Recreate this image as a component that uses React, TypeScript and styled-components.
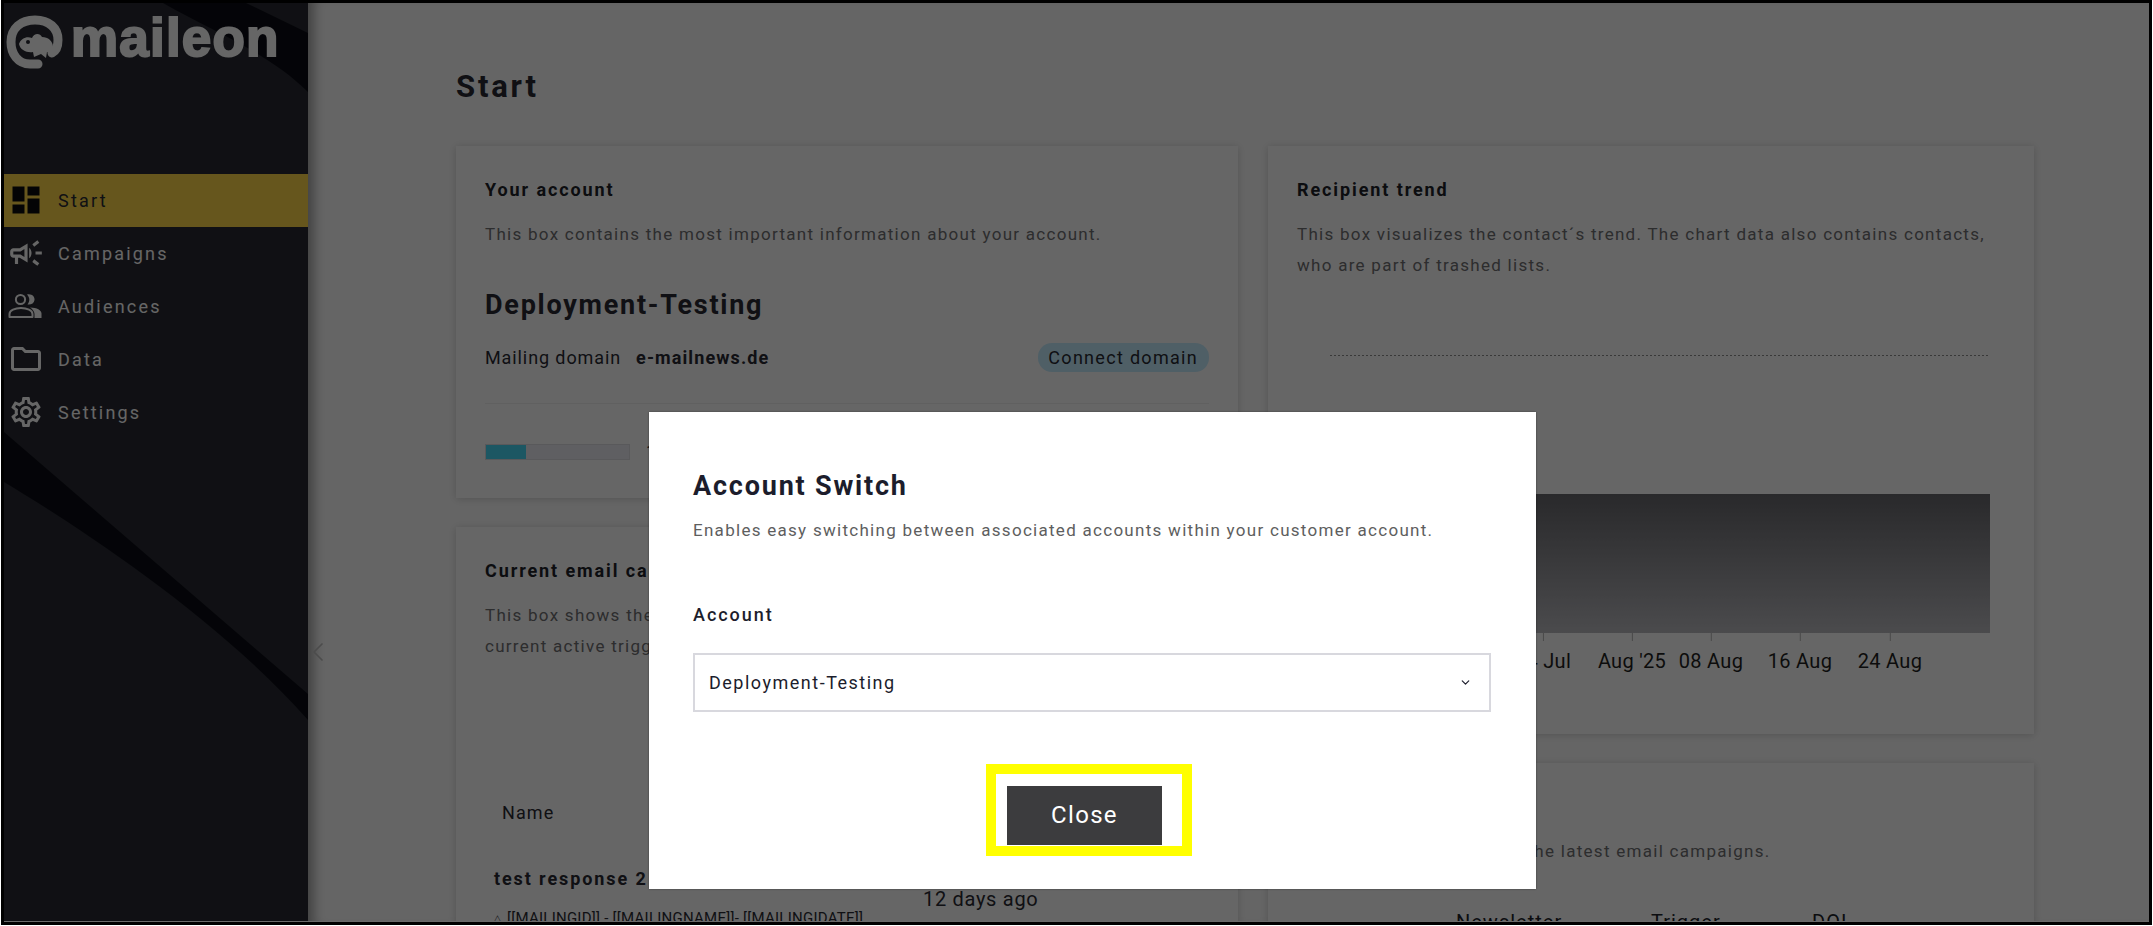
import React from "react";
import styled, { createGlobalStyle } from "styled-components";
import { MdOutlineCampaign, MdOutlineSettings, MdOutlineFolder, MdDashboard } from "react-icons/md";
import { ChevronLeft, ChevronDown } from "lucide-react";

const Global = createGlobalStyle`
  html, body { margin: 0; padding: 0; background: #fff; }
  * { box-sizing: border-box; }
  body { font-family: Roboto, "Liberation Sans", sans-serif; padding: 0 1px 1px; overflow: hidden; }
`;

const Frame = styled.div`
  position: relative;
  width: 2151px;
  height: 925px;
  border: 3px solid #000;
  overflow: hidden;
  display: flex;
  background: #fff;
`;

const Sidebar = styled.aside`
  position: relative;
  flex: 0 0 304px;
  height: 100%;
  background: #282a32;
  display: flex;
  flex-direction: column;
`;

const SidebarArt = styled.svg`
  position: absolute;
  inset: 0;
  width: 100%;
  height: 100%;
`;

const LogoRow = styled.div`
  position: relative;
  height: 171px;
  padding: 12px 0 0 1px;
  display: flex;
  align-items: flex-start;
  gap: 6px;
`;

const LogoWord = styled.span`
  font-family: "Liberation Sans", Arial, sans-serif;
  font-weight: 700;
  font-size: 53px;
  line-height: 46px;
  letter-spacing: 1.2px;
  color: #fff;
  -webkit-text-stroke: 2px #fff;
`;

const Nav = styled.nav`
  position: relative;
  display: flex;
  flex-direction: column;
`;

const NavItem = styled.div<{ $active?: boolean }>`
  height: 53px;
  display: flex;
  align-items: center;
  padding-left: 54px;
  font-size: 18px;
  letter-spacing: 2.2px;
  color: ${(p) => (p.$active ? "#282a32" : "#fff")};
  background: ${(p) => (p.$active ? "#ffd84a" : "transparent")};
  position: relative;
`;

const NavIconSlot = styled.span<{ $active?: boolean }>`
  position: absolute;
  left: 2px;
  top: 6px;
  width: 40px;
  height: 40px;
  display: flex;
  align-items: center;
  justify-content: center;
  color: ${(p) => (p.$active ? "#0a0a0e" : "#fff")};
`;

const Main = styled.main`
  position: relative;
  flex: 1;
  height: 100%;
  background: #fdfdfd;
  padding: 50px 0 0 148px;
  box-shadow: inset 14px 0 12px -8px rgba(0, 0, 0, 0.35);
  overflow: hidden;
`;

const Collapse = styled.span`
  position: absolute;
  left: -6px;
  top: 633px;
  color: #bebebe;
  display: flex;
`;

const PageTitle = styled.h1`
  margin: 0 0 41px;
  height: 52px;
  line-height: 68px;
  font-size: 31px;
  font-weight: 700;
  letter-spacing: 2.8px;
  color: #282a32;
`;

const Columns = styled.div`
  display: grid;
  grid-template-columns: 782px 766px;
  column-gap: 30px;
  align-items: start;
`;

const Column = styled.div`
  display: flex;
  flex-direction: column;
  gap: 29px;
`;

const Card = styled.section<{ $h: number }>`
  height: ${(p) => p.$h}px;
  background: #fff;
  box-shadow: 0 1px 8px rgba(0, 0, 0, 0.18);
  padding: 30px 29px 0;
  position: relative;
`;

const CardTitle = styled.h2`
  margin: 0;
  font-size: 18px;
  line-height: 28px;
  font-weight: 700;
  letter-spacing: 1.9px;
  color: #202228;
  white-space: nowrap;
`;

const CardText = styled.p`
  margin: 15px 0 0;
  font-size: 17px;
  line-height: 31px;
  font-weight: 400;
  letter-spacing: 1.28px;
  color: #707073;
  white-space: nowrap;
`;

const AccountName = styled.h3`
  margin: 35px 0 0;
  font-size: 27px;
  line-height: 40px;
  font-weight: 700;
  letter-spacing: 1.75px;
  color: #282a32;
`;

const DomainRow = styled.div`
  margin-top: 17px;
  display: flex;
  align-items: center;
  height: 30px;
  font-size: 18px;
  letter-spacing: 0.9px;
  color: #282a32;
`;

const DomainValue = styled.strong`
  margin-left: 15px;
  font-weight: 700;
  letter-spacing: 1.1px;
  flex: 1;
`;

const Pill = styled.span`
  height: 29px;
  border-radius: 14px;
  padding: 0 11px 0 10px;
  background: #c5edff;
  display: flex;
  align-items: center;
  letter-spacing: 1.3px;
`;

const Divider = styled.hr`
  margin: 31px 0 0;
  border: 0;
  border-top: 1px solid #f0f0f0;
`;

const ProgressRow = styled.div`
  margin-top: 37px;
  display: flex;
  align-items: center;
  gap: 16px;
  font-size: 18px;
  color: #282a32;
`;

const Track = styled.div`
  width: 145px;
  height: 16px;
  background: #eeeef6;
  border: 1px solid #dedee4;
`;

const Fill = styled.div`
  height: 100%;
  background: #48d9f7;
`;

const TableHead = styled.div`
  margin-top: 140px;
  padding-left: 17px;
  font-size: 18px;
  letter-spacing: 1.1px;
  color: #282a32;
`;

const RowName = styled.div`
  margin-top: 42px;
  padding-left: 9px;
  width: 560px;
  font-size: 18px;
  font-weight: 700;
  letter-spacing: 1.9px;
  color: #282a32;
  line-height: 28px;
`;

const RowSub = styled.div`
  margin-top: 16px;
  padding-left: 9px;
  font-size: 15px;
  letter-spacing: 0.25px;
  color: #282a32;
  white-space: nowrap;
  display: flex;
  align-items: center;
`;

const RowSubMark = styled.span`
  width: 13px;
  font-size: 9px;
`;

const RowDate = styled.span`
  position: absolute;
  left: 467px;
  top: 360px;
  font-size: 20px;
  letter-spacing: 0.7px;
  color: #282a32;
`;

const ChartBox = styled.div`
  position: relative;
  height: 320px;
  margin-top: 74px;
`;

const DottedLine = styled.div`
  margin-left: 33px;
  width: 659px;
  height: 1px;
  background: repeating-linear-gradient(90deg, #8f8f8f 0 2px, transparent 2px 4px);
`;

const Bars = styled.div`
  margin: 138px 0 0 33px;
  width: 660px;
  height: 139px;
  background: linear-gradient(180deg, #67676c 0%, #bbbbc0 100%);
`;

const Axis = styled.div`
  position: relative;
  height: 50px;
`;

const Tick = styled.span<{ $x: number }>`
  position: absolute;
  left: ${(p) => p.$x}px;
  top: 0;
  transform: translateX(-50%);
  display: flex;
  flex-direction: column;
  align-items: center;
  font-size: 20px;
  letter-spacing: 0.3px;
  color: #1f1f22;
  white-space: nowrap;
  &::before {
    content: "";
    width: 1px;
    height: 8px;
    margin-bottom: 8px;
    background: #b5b5b5;
  }
`;

const MiniHead = styled.div`
  margin-top: 43px;
  margin-left: 159px;
  display: flex;
  font-size: 20px;
  letter-spacing: 1px;
  color: #202228;
`;

const MiniLabel = styled.span<{ $w: number }>`
  width: ${(p) => p.$w}px;
`;

const Overlay = styled.div`
  position: absolute;
  inset: 0;
  background: rgba(0, 0, 0, 0.6);
`;

const BottomEdge = styled.div`
  position: absolute;
  left: 0;
  right: 0;
  bottom: 0;
  height: 1px;
  background: #6a6a6a;
`;

const Modal = styled.div`
  position: absolute;
  left: 645px;
  top: 409px;
  width: 887px;
  height: 477px;
  background: #fff;
  padding: 54px 45px 0 44px;
  box-shadow: 0 0 2px rgba(0, 0, 0, 0.4);
`;

const ModalTitle = styled.h2`
  margin: 0;
  font-size: 27px;
  line-height: 40px;
  font-weight: 700;
  letter-spacing: 1.8px;
  color: #1c1d2c;
`;

const ModalText = styled.p`
  margin: 10px 0 0;
  font-size: 17px;
  line-height: 28px;
  letter-spacing: 1.28px;
  color: #5e5e5e;
`;

const FieldLabel = styled.label`
  display: block;
  margin-top: 57px;
  font-size: 18px;
  line-height: 28px;
  font-weight: 500;
  letter-spacing: 1.95px;
  color: #1c1d2c;
`;

const Select = styled.div`
  margin-top: 24px;
  height: 59px;
  border: 2px solid #d8d8de;
  padding: 0 17px 0 14px;
  display: flex;
  align-items: center;
  justify-content: space-between;
  font-size: 18px;
  letter-spacing: 1.5px;
  color: #1c1d2c;
`;

const CloseButton = styled.button`
  position: absolute;
  left: 358px;
  top: 374px;
  width: 155px;
  height: 59px;
  border: 0;
  padding: 0 0 2px;
  background: #3c3c3e;
  color: #fff;
  font-family: inherit;
  font-size: 24px;
  letter-spacing: 1.3px;
`;

const Highlight = styled.div`
  position: absolute;
  left: 337px;
  top: 352px;
  width: 206px;
  height: 92px;
  border: 10px solid #ffff00;
  pointer-events: none;
`;

function MaileonMark() {
  return (
    <svg width="60" height="54" viewBox="0 0 58 54" fill="none">
      <path
        d="M32 49 H24 C12 49 5 39 5 27 C5 13 15 5 29 5 C43 5 52 13 52 25 C52 32 50 36 46 38"
        stroke="#fff"
        strokeWidth="9"
        strokeLinecap="round"
      />
      <path
        d="M13 29 C15 23 21 21 26 23 C28 18 34 18 36 22 C42 22 47 26 47 32 C47 36 44 38 41 37 L40 43 L35 39 L28 42 L27 37 C21 38 14 35 13 29 Z"
        fill="#fff"
      />
      <circle cx="22" cy="27" r="2" fill="#282a32" />
    </svg>
  );
}

function AudienceIcon() {
  return (
    <svg width="36" height="26" viewBox="0 0 36 26" fill="none">
      <circle cx="12.5" cy="6.5" r="4.6" stroke="#fff" strokeWidth="2" />
      <path d="M19 1.5 C24 0.5 27 4 26.5 7 C26 10.5 23 12 19.5 11.5 C22 8.5 22 4.5 19 1.5 Z" fill="#fff" />
      <path d="M1.5 24 V21 C1.5 17.5 7 15 13 15 C19 15 24.5 17.5 24.5 21 V24 Z" stroke="#fff" strokeWidth="2" strokeLinejoin="round" />
      <path d="M22 14.5 C29 14.8 33.5 17 33.5 20.5 V25 H26.5 V21 C26.5 18.5 24.5 16 22 14.5 Z" fill="#fff" />
    </svg>
  );
}

const items = [
  { label: "Start", icon: <MdDashboard size={36} />, active: true },
  { label: "Campaigns", icon: <MdOutlineCampaign size={38} /> },
  { label: "Audiences", icon: <AudienceIcon /> },
  { label: "Data", icon: <MdOutlineFolder size={36} /> },
  { label: "Settings", icon: <MdOutlineSettings size={36} /> },
];

const ticks = [
  { x: 246, label: "24 Jul" },
  { x: 335, label: "Aug '25" },
  { x: 414, label: "08 Aug" },
  { x: 503, label: "16 Aug" },
  { x: 593, label: "24 Aug" },
];

export default function App() {
  return (
    <Frame>
      <Global />
      <Sidebar>
        <SidebarArt viewBox="0 0 304 919" preserveAspectRatio="none">
          <path d="M159 0 C212 30 265 50 304 89 V30 L242 0 Z" fill="#0c0c16" />
          <path d="M0 429 L304 691 V717 C210 610 60 515 0 479 Z" fill="#0c0c16" />
        </SidebarArt>
        <LogoRow>
          <MaileonMark />
          <LogoWord>maileon</LogoWord>
        </LogoRow>
        <Nav>
          {items.map((it) => (
            <NavItem key={it.label} $active={it.active}>
              <NavIconSlot $active={it.active}>{it.icon}</NavIconSlot>
              {it.label}
            </NavItem>
          ))}
        </Nav>
      </Sidebar>
      <Main>
        <Collapse>
          <ChevronLeft size={32} strokeWidth={1.3} />
        </Collapse>
        <PageTitle>Start</PageTitle>
        <Columns>
          <Column>
            <Card $h={352}>
              <CardTitle>Your account</CardTitle>
              <CardText>This box contains the most important information about your account.</CardText>
              <AccountName>Deployment-Testing</AccountName>
              <DomainRow>
                Mailing domain
                <DomainValue>e-mailnews.de</DomainValue>
                <Pill>Connect domain</Pill>
              </DomainRow>
              <Divider />
              <ProgressRow>
                <Track>
                  <Fill style={{ width: "28%" }} />
                </Track>
                1,204 of 5,000 contacts
              </ProgressRow>
            </Card>
            <Card $h={500}>
              <CardTitle>Current email campaigns</CardTitle>
              <CardText>
                This box shows the current email campaigns,
                <br />
                current active triggers and their status.
              </CardText>
              <TableHead>Name</TableHead>
              <RowName>test response 2</RowName>
              <RowSub>
                <RowSubMark>△</RowSubMark>[[MAILINGID]] - [[MAILINGNAME]]- [[MAILINGIDATE]]
              </RowSub>
              <RowDate>12 days ago</RowDate>
            </Card>
          </Column>
          <Column>
            <Card $h={588}>
              <CardTitle>Recipient trend</CardTitle>
              <CardText>
                This box visualizes the contact´s trend. The chart data also contains contacts,
                <br />
                who are part of trashed lists.
              </CardText>
              <ChartBox>
                <DottedLine />
                <Bars />
                <Axis>
                  {ticks.map((t) => (
                    <Tick key={t.label} $x={t.x}>
                      {t.label}
                    </Tick>
                  ))}
                </Axis>
              </ChartBox>
            </Card>
            <Card $h={300}>
              <CardTitle>Latest email campaigns</CardTitle>
              <CardText>This box shows results of the latest email campaigns.</CardText>
              <MiniHead>
                <MiniLabel $w={195}>Newsletter</MiniLabel>
                <MiniLabel $w={161}>Trigger</MiniLabel>
                <MiniLabel $w={60}>DOI</MiniLabel>
              </MiniHead>
            </Card>
          </Column>
        </Columns>
      </Main>
      <Overlay />
      <BottomEdge />
      <Modal>
        <ModalTitle>Account Switch</ModalTitle>
        <ModalText>Enables easy switching between associated accounts within your customer account.</ModalText>
        <FieldLabel>Account</FieldLabel>
        <Select>
          Deployment-Testing
          <ChevronDown size={13} strokeWidth={2.2} />
        </Select>
        <CloseButton>Close</CloseButton>
        <Highlight />
      </Modal>
    </Frame>
  );
}
